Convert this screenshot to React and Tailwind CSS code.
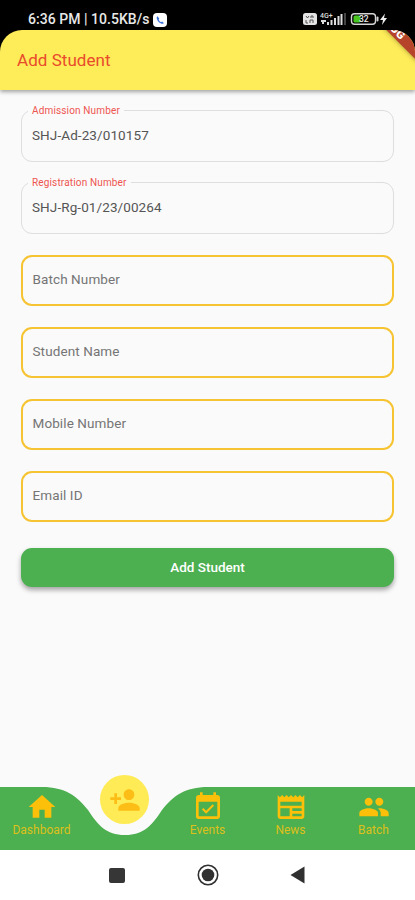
import { MdHome, MdPersonAdd, MdEventAvailable, MdNewspaper, MdPeople } from 'react-icons/md';

const filledFields = [
  { label: 'Admission Number', value: 'SHJ-Ad-23/010157' },
  { label: 'Registration Number', value: 'SHJ-Rg-01/23/00264' },
];

const emptyFields = ['Batch Number', 'Student Name', 'Mobile Number', 'Email ID'];

function StatusBar() {
  return (
    <div className="flex h-[30px] shrink-0 items-start justify-between pl-[28px] pr-[26px] pt-[12px] text-white">
      <div className="flex h-[15px] items-center">
        <span className="w-[123px] whitespace-nowrap text-[14px] font-medium leading-[15px] tracking-[0.04px] text-[#e8e8e8]">6:36 PM | 10.5KB/s</span>
        <svg className="ml-[2px] h-[14px] w-[14px]" viewBox="0 0 14 14">
          <rect width="14" height="14" rx="4" fill="#fff" />
          <path d="M4.6 3.2c-.9.5-1.1 1.5-.7 2.7.7 2.1 2.1 3.7 4.2 4.7 1.2.5 2.2.3 2.7-.7L9.1 8.5l-1.1.7C7 8.6 6.2 7.8 5.6 6.7l.7-1z" fill="#3970dd" />
        </svg>
      </div>
      <svg className="h-[15px] w-[86px]" viewBox="0 0 86 15">
        <rect x="0" y="1" width="14" height="12" rx="2.5" fill="#e4e4e4" />
        <path d="M3 4l1.5 2L6 4M8 6V4h2v2M3 8v3h2M7 11V8h3v3" stroke="#555" fill="none" />
        <text x="17" y="6" fontSize="7" fontWeight="500" fill="#ddd">4G+</text>
        <path d="M18 9h5M20 8v4M25 10v3M28.5 8v5M32 6v7M35.5 4v9M38.5 2v11" stroke="#ddd" strokeWidth="2" />
        <path d="M42 1v12" stroke="#444" strokeWidth="2" />
        <rect x="48.5" y="1.7" width="24" height="10.6" rx="3" stroke="#d5d5d5" strokeWidth="1.4" fill="none" />
        <rect x="50.5" y="3.5" width="7" height="7" rx="1.5" fill="#48c51f" />
        <rect x="73.5" y="4.5" width="2" height="5" rx="1" fill="#d5d5d5" />
        <text x="56" y="10" fontSize="8.5" fontWeight="500" fill="#eee">32</text>
        <path d="M82 1.5l-5 6.5h3l-1 5 5-7h-3z" fill="#eee" />
      </svg>
    </div>
  );
}

function Header() {
  return (
    <header className="relative z-10 h-[60px] shrink-0 bg-black shadow-[0_2px_4px_rgba(0,0,0,0.35)]">
      <div className="relative flex h-full items-center overflow-hidden rounded-t-[22px] bg-[#ffec59] pl-[17px]">
        <h1 className="text-[17px] leading-5 tracking-[0.05px] text-[#e84b2c]">Add Student</h1>
        <span className="absolute -top-[12px] left-[340px] h-[13px] w-[100px] rotate-45 bg-[#b5442a] text-center text-[11.5px] font-black leading-[13px] text-white shadow-[0_0_5px_rgba(0,0,0,0.4)]">
          DEBUG
        </span>
      </div>
    </header>
  );
}

function FilledField({ label, value }) {
  return (
    <div className="relative flex h-[52px] items-center rounded-[11px] border border-[#dedede] px-[10px]">
      <span className="absolute -top-[6px] left-[6px] bg-[#fafafa] px-1 text-[10px] leading-[12px] tracking-[0.15px] text-[#ee5550]">
        {label}
      </span>
      <span className="pb-[2px] text-[13.5px] leading-4 tracking-[0.1px] text-[#555]">{value}</span>
    </div>
  );
}

function EmptyField({ label }) {
  return (
    <div className="flex h-[51px] items-center rounded-[11px] border-2 border-[#f6c433] px-[9.5px] pb-[2px] text-[13.5px] tracking-[0.1px] text-[#757575]">
      {label}
    </div>
  );
}

function NavItem({ icon: Icon, label }) {
  return (
    <div className="flex flex-col items-center pt-[4px] text-[#fcc00a]">
      <Icon className="h-[32px] w-[32px]" />
      <span className="text-[12px] leading-[14px] text-[#dcc01b]">{label}</span>
    </div>
  );
}

function BottomNav() {
  return (
    <nav className="relative h-[63px] shrink-0">
      <svg className="absolute inset-0 h-[63px] w-full" viewBox="0 0 415 63" preserveAspectRatio="none">
        <path d="M0 0H42C65 0 77 9 88 23C98 38 106 48 125 48C144 48 152 38 162 23C173 9 185 0 208 0H415V63H0Z" fill="#4caf50" />
      </svg>
      <div className="relative grid h-full grid-cols-5">
        <NavItem icon={MdHome} label="Dashboard" />
        <div className="flex justify-center">
          <div className="-mt-[12px] flex h-[49px] w-[49px] items-center justify-center rounded-full bg-[#ffeb55]">
            <MdPersonAdd className="h-[32px] w-[32px] text-[#fcbd16]" />
          </div>
        </div>
        <NavItem icon={MdEventAvailable} label="Events" />
        <NavItem icon={MdNewspaper} label="News" />
        <NavItem icon={MdPeople} label="Batch" />
      </div>
    </nav>
  );
}

function SystemNav() {
  return (
    <div className="flex h-[50px] shrink-0 items-center bg-white pl-[109px] text-[#303030]">
      <div className="h-[15px] w-[16px] rounded-[2px] bg-[#363636]" />
      <svg className="ml-[72px] h-[22px] w-[22px]" viewBox="0 0 22 22">
        <circle cx="11" cy="11" r="9.7" fill="none" stroke="currentColor" strokeWidth="1.6" />
        <circle cx="11" cy="11" r="6.3" fill="currentColor" />
      </svg>
      <svg className="ml-[71px] h-[18px] w-[15px]" viewBox="0 0 15 18">
        <path d="M14.5.5v17L.5 9z" fill="currentColor" />
      </svg>
    </div>
  );
}

export default function App() {
  return (
    <div className="flex h-[900px] w-[415px] flex-col overflow-hidden bg-black font-['Roboto',sans-serif]">
      <StatusBar />
      <Header />
      <main className="flex flex-1 flex-col bg-[#fafafa] px-[21px] pt-[20px]">
        <div className="flex flex-col gap-[20px]">
          {filledFields.map((field) => (
            <FilledField key={field.label} label={field.label} value={field.value} />
          ))}
        </div>
        <div className="mt-[21px] flex flex-col gap-[21px]">
          {emptyFields.map((label) => (
            <EmptyField key={label} label={label} />
          ))}
        </div>
        <button className="mt-[26px] h-[39px] rounded-[11px] bg-[#4caf50] text-[13.5px] font-medium text-white shadow-[0_3px_5px_rgba(0,0,0,0.35)]">
          Add Student
        </button>
      </main>
      <div className="bg-[#fafafa]">
        <BottomNav />
      </div>
      <SystemNav />
    </div>
  );
}
